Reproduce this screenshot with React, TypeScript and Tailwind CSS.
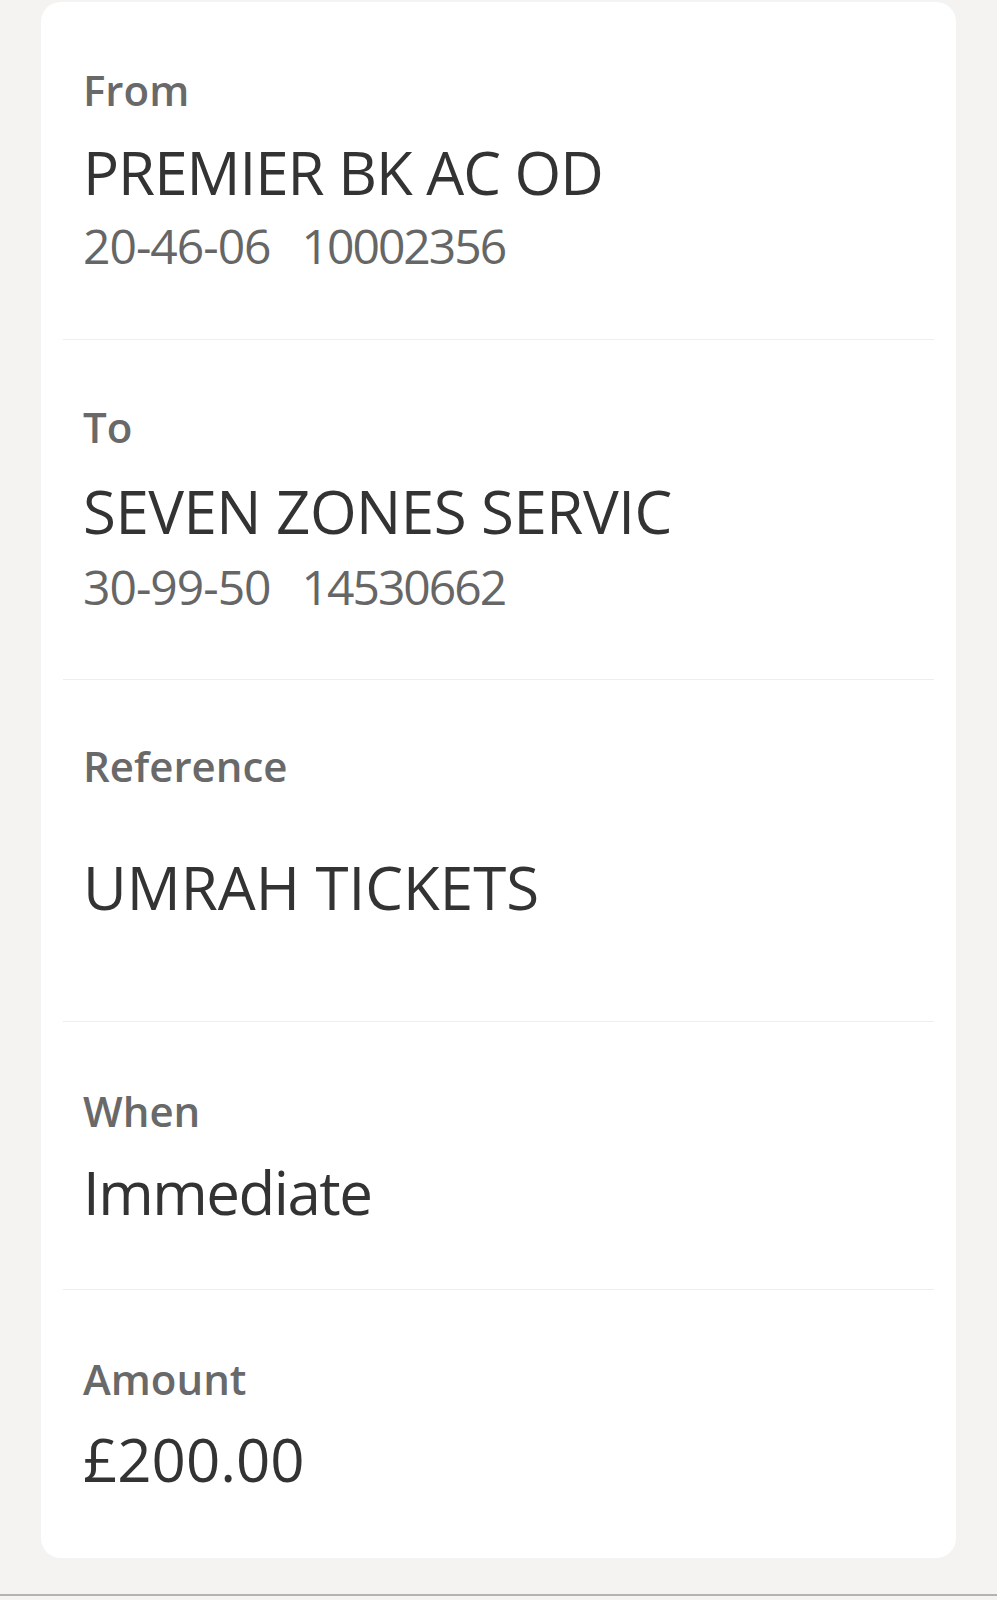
import React from "react";

const font = { fontFamily: '"Open Sans", "Noto Sans", sans-serif' };

function Label({ children }: { children: React.ReactNode }) {
  return (
    <div className="text-[42px] leading-[44px] font-semibold text-[#696969]">{children}</div>
  );
}

function Value({ children, className = "" }: { children: React.ReactNode; className?: string }) {
  return (
    <div className={`text-[60px] leading-[60px] font-normal text-[#333333] ${className}`}>{children}</div>
  );
}

function Sub({ code, acc, className = "" }: { code: string; acc: string; className?: string }) {
  return (
    <div className={`flex gap-[31px] text-[48px] leading-[50px] text-[#666666] ${className}`}>
      <span className="tracking-[-1px]">{code}</span>
      <span className="tracking-[-2px]">{acc}</span>
    </div>
  );
}

export default function App() {
  return (
    <div className="min-h-[1600px] w-[997px] bg-[#f4f3f1] pt-[2px] flex flex-col" style={font}>
      <div className="ml-[41px] w-[915px] h-[1556px] rounded-[20px] bg-white px-[22px] flex flex-col">
        <section className="h-[338px] border-b border-[#eeeeee] pt-[66px] pl-[20px]">
          <Label>From</Label>
          <Value className="mt-[30px] tracking-[-1px]">PREMIER BK AC OD</Value>
          <Sub className="mt-[19px]" code="20-46-06" acc="10002356" />
        </section>
        <section className="h-[340px] border-b border-[#eeeeee] pt-[65px] pl-[20px]">
          <Label>To</Label>
          <Value className="mt-[32px] tracking-[-0.5px]">SEVEN ZONES SERVIC</Value>
          <Sub className="mt-[21px]" code="30-99-50" acc="14530662" />
        </section>
        <section className="h-[342px] border-b border-[#eeeeee] pt-[64px] pl-[20px]">
          <Label>Reference</Label>
          <Value className="mt-[69px]">UMRAH TICKETS</Value>
        </section>
        <section className="h-[268px] border-b border-[#eeeeee] pt-[67px] pl-[20px]">
          <Label>When</Label>
          <Value className="mt-[29px] tracking-[-1.5px]">Immediate</Value>
        </section>
        <section className="h-[268px] pt-[67px] pl-[20px]">
          <Label>Amount</Label>
          <Value className="mt-[28px]">£200.00</Value>
        </section>
      </div>
      <div className="mt-[36px] h-[2px] w-full bg-[#b3b3b3]" />
      <div className="h-[4px] w-full bg-[#f4f3f1]" />
    </div>
  );
}
